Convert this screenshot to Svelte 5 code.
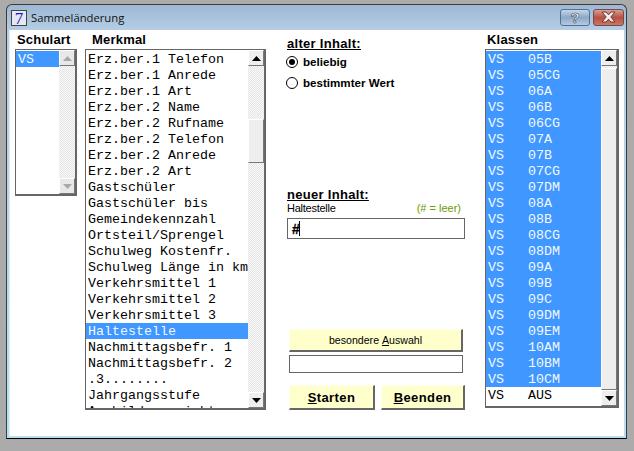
<script lang="ts">
	// Win7-style dialog "Sammeländerung": three lists plus the old/new value column.
	const merkmale = [
		'Erz.ber.1 Telefon', 'Erz.ber.1 Anrede', 'Erz.ber.1 Art', 'Erz.ber.2 Name',
		'Erz.ber.2 Rufname', 'Erz.ber.2 Telefon', 'Erz.ber.2 Anrede', 'Erz.ber.2 Art',
		'Gastschüler', 'Gastschüler bis', 'Gemeindekennzahl', 'Ortsteil/Sprengel',
		'Schulweg Kostenfr.', 'Schulweg Länge in km', 'Verkehrsmittel 1', 'Verkehrsmittel 2',
		'Verkehrsmittel 3', 'Haltestelle', 'Nachmittagsbefr. 1', 'Nachmittagsbefr. 2',
		'.3........', 'Jahrgangsstufe', 'Ausbildungsricht.'
	];
	const klassen = [
		'05B', '05CG', '06A', '06B', '06CG', '07A', '07B', '07CG', '07DM', '08A', '08B',
		'08CG', '08DM', '09A', '09B', '09C', '09DM', '09EM', '10AM', '10BM', '10CM'
	];
</script>

{#snippet scrollbar(thumbTop: number, thumbHeight: number, disabled: boolean)}
	<div class="bar">
		<div class="arrow" class:off={disabled}>
			<svg width="9" height="5" viewBox="0 0 9 5"><path d="M4.5 0L9 5H0z" /></svg>
		</div>
		{#if thumbHeight}
			<div class="thumb" style="top: {thumbTop}px; height: {thumbHeight}px"></div>
		{/if}
		<div class="arrow bottom" class:off={disabled}>
			<svg width="9" height="5" viewBox="0 0 9 5"><path d="M0 0H9L4.5 5z" /></svg>
		</div>
	</div>
{/snippet}

<div class="window">
	<header class="titlebar">
		<span class="appicon">7</span>
		<span class="title">Sammeländerung</span>
		<div class="controls">
			<div class="ctl help">?</div>
			<div class="ctl close">
				<svg width="17" height="12" viewBox="0 0 17 12">
					<path d="M2 1H6L8.5 3.8L11 1H15L10.8 6L15 11H11L8.5 8.2L6 11H2L6.2 6z" fill="#f4eeee" stroke="#6b3a36" stroke-width="1" />
				</svg>
			</div>
		</div>
	</header>

	<div class="client">
		<section class="col schulart">
			<h2 class="cap">Schulart</h2>
			<div class="list">
				<div class="rows">
					<div class="row sel">VS</div>
				</div>
				{@render scrollbar(0, 0, true)}
			</div>
		</section>

		<section class="col merkmal">
			<h2 class="cap">Merkmal</h2>
			<div class="list">
				<div class="rows">
					{#each merkmale as m}
						<div class="row" class:sel={m === 'Haltestelle'}>{m}</div>
					{/each}
				</div>
				{@render scrollbar(69, 44, false)}
			</div>
		</section>

		<section class="middle">
			<h3 class="head">alter Inhalt:</h3>
			<div class="radio first">
				<span class="dot on"></span>beliebig
			</div>
			<div class="radio">
				<span class="dot"></span>bestimmter Wert
			</div>

			<h3 class="head neu">neuer Inhalt:</h3>
			<div class="hint">
				<span class="feld">Haltestelle</span>
				<span class="leer">(# = leer)</span>
			</div>
			<div class="field value"><span class="hash">#</span><span class="caret"></span></div>

			<div class="inset">
				<div class="btn wide">besondere <u>A</u>uswahl</div>
				<div class="field blank"></div>
				<div class="actions">
					<div class="btn big"><u>S</u>tarten</div>
					<div class="btn big end"><u>B</u>eenden</div>
				</div>
			</div>
		</section>

		<section class="col klassen">
			<h2 class="cap">Klassen</h2>
			<div class="list">
				<div class="rows">
					{#each klassen as k}
						<div class="row sel">VS   {k}</div>
					{/each}
					<div class="row">VS   AUS</div>
				</div>
				{@render scrollbar(18, 322, false)}
			</div>
		</section>
	</div>
</div>

<style>
	:global(body) {
		background: #ababab;
		height: 451px;
		overflow: hidden;
	}

	.window {
		box-sizing: border-box;
		width: 621px;
		height: 435px;
		margin: 4px 0 0 6px;
		border: 1px solid #3c3c3c;
		border-bottom-color: #000;
		border-radius: 6px 6px 0 0;
		background: linear-gradient(180deg, #9db8d4 0, #b6cee6 26px, #b9e0f0 100%);
		padding: 0 2px 2px;
		display: flex;
		flex-direction: column;
		font-family: 'Liberation Sans', sans-serif;
		color: #000;
	}

	.titlebar {
		height: 25px;
		flex: none;
		display: flex;
		align-items: center;
		padding-left: 2px;
	}

	.appicon {
		box-sizing: border-box;
		width: 16px;
		height: 16px;
		margin-top: 1px;
		background: #e4e8f0;
		border: 1px solid #444;
		color: #1414d8;
		font: 17px/15px 'Liberation Serif', serif;
		text-align: center;
	}

	.title {
		margin-left: 4px;
		font-family: 'Open Sans', sans-serif;
		font-size: 11.25px;
		color: #111;
	}

	.controls {
		margin-left: auto;
		margin-right: 0;
		margin-top: -1px;
		display: flex;
		gap: 3px;
	}

	.ctl {
		box-sizing: border-box;
		height: 17px;
		border: 1px solid #54708e;
		border-radius: 3px;
		display: flex;
		align-items: center;
		justify-content: center;
	}

	.help {
		width: 30px;
		background: linear-gradient(180deg, #c5d6e8, #8ba8c8 50%, #b4cbe2);
		color: #f4f6f8;
		font: bold 15px/15px 'Liberation Sans', sans-serif;
		-webkit-text-stroke: 0.6px #3e4e60;
	}

	.close {
		width: 31px;
		background: linear-gradient(180deg, #d8a096, #b85040 50%, #c87868);
		border-color: #7a4a48;
	}

	.client {
		flex: 1;
		background: #fff;
		border-left: 1px solid #dcecf6;
		display: flex;
		padding: 0 0 0 5px;
		min-height: 0;
	}

	.col {
		display: flex;
		flex-direction: column;
	}

	.cap {
		box-sizing: border-box;
		margin: 0;
		height: 19px;
		padding-top: 1px;
		font-size: 13px;
		line-height: 17px;
		font-weight: bold;
		letter-spacing: 0.2px;
	}

	.schulart { width: 62px; }
	.schulart .cap { padding-left: 2px; }
	.schulart .list { height: 147px; }

	.merkmal { width: 181px; margin-left: 8px; }
	.merkmal .cap { padding-left: 7px; }
	.merkmal .list { height: 361px; }

	.klassen { width: 134px; margin-left: 18px; }
	.klassen .cap { padding-left: 2px; }
	.klassen .list { height: 359px; }

	.list {
		box-sizing: border-box;
		border: 1px solid #666;
		border-right-width: 2px;
		border-bottom-width: 2px;
		padding-top: 1px;
		display: flex;
		overflow: hidden;
		background: #fff;
	}

	.rows {
		flex: 1;
		min-width: 0;
		overflow: hidden;
	}

	.row {
		box-sizing: border-box;
		height: 16px;
		padding: 1px 0 0 2px;
		font: 13.33px/16px 'Liberation Mono', monospace;
		white-space: pre;
		overflow: hidden;
	}

	.sel {
		background: #3f97ff;
		color: #f2f8ff;
	}

	.bar {
		position: relative;
		width: 16px;
		margin-top: -1px;
		flex: none;
		display: flex;
		flex-direction: column;
		justify-content: space-between;
		background-color: #f4f4f4;
		background-image: repeating-conic-gradient(#e4e4e4 0 25%, #fafafa 0 50%);
		background-size: 2px 2px;
	}

	.arrow {
		box-sizing: border-box;
		height: 16px;
		background: #eeeeee;
		border: 1px solid;
		border-color: #fff #777 #777 #fff;
		display: flex;
		align-items: center;
		justify-content: center;
	}

	.arrow path { fill: #000; }
	.arrow.off { background: #e8e8e8; }
	.arrow.off path { fill: #a8a8a8; }

	.thumb {
		position: absolute;
		left: 0;
		right: 0;
		box-sizing: border-box;
		background: #eeeeee;
		border: 1px solid;
		border-color: #fff #777 #777 #fff;
	}

	.middle {
		width: 180px;
		margin-left: 21px;
		padding-top: 6px;
		flex: none;
		display: flex;
		flex-direction: column;
	}

	.head {
		margin: 0;
		height: 15px;
		font-size: 13px;
		line-height: 15px;
		font-weight: bold;
		text-decoration: underline;
		letter-spacing: 0.3px;
	}

	.radio {
		display: flex;
		align-items: center;
		gap: 5px;
		height: 21px;
		margin-left: -1px;
		font-size: 11.6px;
		font-weight: bold;
	}

	.first { margin-top: 0; }

	.dot {
		box-sizing: border-box;
		width: 12px;
		height: 12px;
		border: 1px solid #000;
		border-radius: 50%;
		background: #fff;
		position: relative;
	}

	.dot.on::after {
		content: '';
		position: absolute;
		inset: 2px;
		border-radius: 50%;
		background: #000;
	}

	.neu { margin-top: 94px; }

	.hint {
		display: flex;
		justify-content: space-between;
		height: 17px;
		margin-top: -1px;
		padding-right: 6px;
		font-size: 11px;
		line-height: 14px;
	}

	.feld { letter-spacing: -0.25px; }

	.leer { color: #6c9a00; }

	.field {
		box-sizing: border-box;
		border: 1px solid #666;
		background: #fff;
	}

	.value {
		width: 178px;
		height: 21px;
		padding-left: 4px;
		display: flex;
		align-items: center;
	}

	.hash {
		font-size: 14px;
		font-weight: bold;
		-webkit-text-stroke: 0.3px #000;
	}

	.caret {
		width: 1px;
		height: 15px;
		background: #000;
		margin-left: -1px;
	}

	.inset {
		margin-top: 90px;
		padding-left: 2px;
		display: flex;
		flex-direction: column;
	}

	.btn {
		box-sizing: border-box;
		background: #ffffcc;
		border: 1px solid;
		border-color: #fffff0 #666 #666 #fffff0;
		border-width: 1px 2px 2px 1px;
		display: flex;
		align-items: center;
		justify-content: center;
		white-space: pre;
	}

	.wide {
		width: 174px;
		height: 23px;
		font-size: 10.6px;
	}

	.blank {
		width: 174px;
		height: 18px;
		margin-top: 3px;
	}

	.actions {
		display: flex;
		gap: 6px;
		margin-top: 12px;
	}

	.big {
		width: 86px;
		height: 25px;
		font-size: 13px;
		font-weight: bold;
		letter-spacing: 0.4px;
	}

	.end { width: 84px; }
</style>
